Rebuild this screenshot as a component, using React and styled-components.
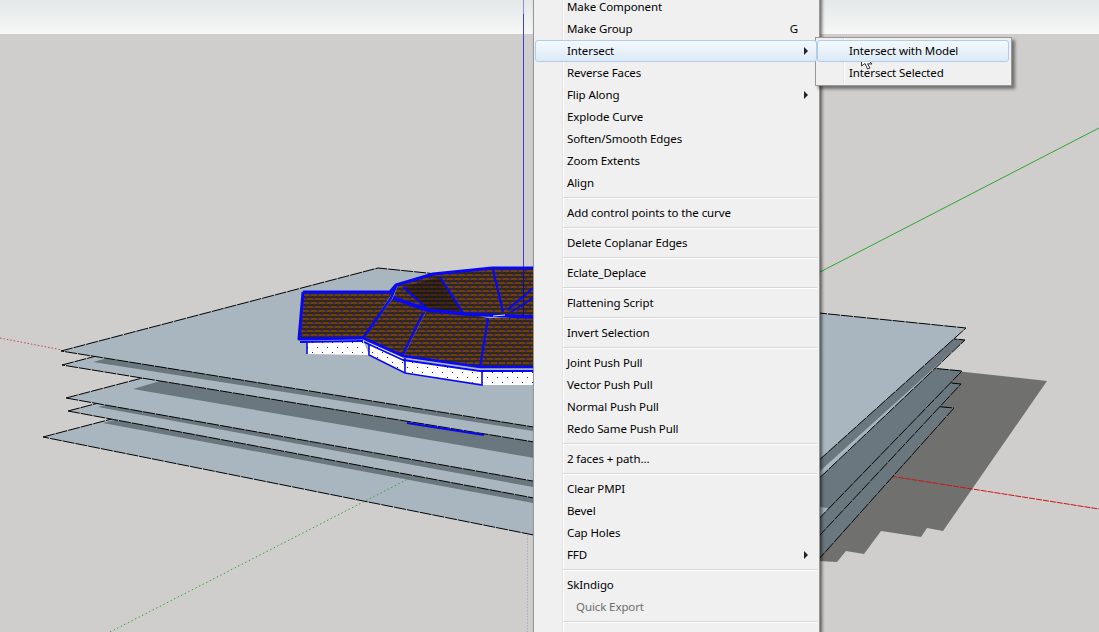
import React from 'react';
import styled, { createGlobalStyle } from 'styled-components';

const GlobalStyle = createGlobalStyle`
  html, body {
    margin: 0;
    padding: 0;
    background: #cfcecc;
  }
`;

const Stage = styled.div`
  position: relative;
  width: 1099px;
  height: 632px;
  overflow: hidden;
  background: linear-gradient(#e4e8e8 0, #f6f7f7 34px, #cfcecc 34px);
  font-family: "Noto Sans", "Open Sans", sans-serif;
  font-size: 11.5px;
  color: #000;
`;

const Scene = styled.svg`
  display: block;
  width: 1099px;
  height: 632px;
`;

const Menu = styled.div`
  position: absolute;
  top: -5px;
  left: 533px;
  width: 285px;
  background: #f0f0f0;
  border: 1px solid #979797;
  box-shadow: 2px 2px 3px rgba(0, 0, 0, 0.55);
  &::before {
    content: "";
    position: absolute;
    top: 0;
    bottom: 0;
    left: 28px;
    width: 1px;
    background: #e2e3e3;
    box-shadow: 1px 0 0 #fff;
  }
`;

const SubMenu = styled(Menu)`
  top: 41px;
  left: 281px;
  width: 195px;
  padding: 2px 0 1px;
  box-shadow: 3px 3px 3px rgba(0, 0, 0, 0.45);
  &::before {
    left: 27px;
  }
`;

const Row = styled.div`
  position: relative;
  z-index: 1;
  box-sizing: border-box;
  height: 22px;
  display: flex;
  align-items: center;
  margin: 0 2px 0 1px;
  padding-left: ${({ $disabled }) => ($disabled ? 40 : 31)}px;
  padding-right: 8px;
  border: 1px solid ${({ $active }) => ($active ? '#aeccee' : 'transparent')};
  border-radius: 3px;
  color: ${({ $disabled }) => ($disabled ? '#6d6d6d' : '#000')};
  background: ${({ $active }) =>
    $active ? 'linear-gradient(#f4f9fe, #dde9f6)' : 'transparent'};
  white-space: nowrap;
  line-height: 14px;
`;

const Label = styled.span`
  flex: 1;
  letter-spacing: -0.1px;
`;

const Shortcut = styled.span`
  margin-right: 10px;
`;

const Arrow = styled.i`
  width: 0;
  height: 0;
  border-left: 4px solid #222;
  border-top: 4px solid transparent;
  border-bottom: 4px solid transparent;
`;

const Separator = styled.div`
  position: relative;
  z-index: 1;
  height: 1px;
  margin: 3px 2px 4px 29px;
  background: #d7d7d7;
  box-shadow: 0 1px 0 #fff;
`;

const Cursor = styled.svg`
  position: absolute;
  top: 51px;
  left: 860px;
  width: 14px;
  height: 20px;
`;

const groups = [
  [
    { label: 'Make Component' },
    { label: 'Make Group', shortcut: 'G' },
    { label: 'Intersect', arrow: true, active: true },
    { label: 'Reverse Faces' },
    { label: 'Flip Along', arrow: true },
    { label: 'Explode Curve' },
    { label: 'Soften/Smooth Edges' },
    { label: 'Zoom Extents' },
    { label: 'Align' },
  ],
  [{ label: 'Add control points to the curve' }],
  [{ label: 'Delete Coplanar Edges' }],
  [{ label: 'Eclate_Deplace' }],
  [{ label: 'Flattening Script' }],
  [{ label: 'Invert Selection' }],
  [
    { label: 'Joint Push Pull' },
    { label: 'Vector Push Pull' },
    { label: 'Normal Push Pull' },
    { label: 'Redo Same Push Pull' },
  ],
  [{ label: '2 faces + path...' }],
  [
    { label: 'Clear PMPI' },
    { label: 'Bevel' },
    { label: 'Cap Holes' },
    { label: 'FFD', arrow: true },
  ],
  [{ label: 'SkIndigo' }, { label: 'Quick Export', disabled: true }],
  [{ label: '' }],
];

const plates = [
  {
    face: '43,437 360,354 954,408 794,587',
    shade: '103,423 360,354 954,408 794,587 533,503',
  },
  {
    face: '68,411 385,328 961,384 807,549',
    shade: '98,407 385,328 961,384 807,549 533,487',
  },
  {
    face: '66,398 383,315 962,371 808,530',
    shade: '133,389 383,315 962,371 832,509',
  },
  {
    face: '62,365 379,282 965,340 810,487',
    shade: '93,362 379,282 965,340 810,480 533,431',
  },
];

const bricks = [
  '303,292 393,292 363,338 299,339',
  '363,338 393,298 427,310 403,357',
  '427,310 465,313 488,318 480,367 403,357',
  '488,318 533,317 533,367 480,367',
];

const walls = [
  '307,341 363,340 369,355 307,354',
  '369,343 403,358 405,373 369,355',
  '405,360 482,370 482,384 405,373',
  '482,372 533,372 533,385 482,385',
];

const Model = () => (
  <g>
    <defs>
      <pattern id="brick" width="8" height="8" patternUnits="userSpaceOnUse">
        <rect width="8" height="8" fill="#6e4108" />
        <rect y="0" width="8" height="2" fill="#33281e" />
        <rect y="4" width="8" height="2" fill="#33281e" />
        <rect x="1" y="2" width="1.5" height="1.5" fill="#1010e0" />
        <rect x="5" y="6" width="1.5" height="1.5" fill="#1010e0" />
      </pattern>
      <pattern id="brickDark" width="8" height="8" patternUnits="userSpaceOnUse">
        <rect width="8" height="8" fill="#462808" />
        <rect y="0" width="8" height="2" fill="#221a14" />
        <rect y="4" width="8" height="2" fill="#221a14" />
        <rect x="1" y="2" width="1.5" height="1.5" fill="#14149c" />
        <rect x="5" y="6" width="1.5" height="1.5" fill="#14149c" />
      </pattern>
      <pattern id="wall" width="10" height="10" patternUnits="userSpaceOnUse">
        <rect width="10" height="10" fill="#fff" />
        <rect x="2" y="2" width="1" height="1" fill="#1010e0" />
        <rect x="7" y="7" width="1" height="1" fill="#1010e0" />
      </pattern>
    </defs>

    {walls.map((points) => (
      <polygon key={points} points={points} fill="url(#wall)" />
    ))}
    <polyline points="307,342 307,354" fill="none" stroke="#0c0cf0" strokeWidth="1.6" />
    <polyline
      points="369,345 369,355 405,373 482,385 482,370"
      fill="none"
      stroke="#0c0cf0"
      strokeWidth="1.6"
    />
    <polyline points="405,358 405,373" fill="none" stroke="#0c0cf0" strokeWidth="1.6" />

    <polygon
      points="398,285 433,274 492,268 533,268 533,317 465,313 427,310 393,298"
      fill="url(#brick)"
    />
    <polygon points="403,287 440,277 463,313 427,309" fill="url(#brickDark)" />
    {bricks.map((points) => (
      <polygon key={points} points={points} fill="url(#brick)" />
    ))}

    <g fill="none" stroke="#0808f4" strokeLinejoin="round">
      <polyline
        points="303,292 390,292 396,285 433,274 492,268 533,268"
        strokeWidth="3"
      />
      <polyline points="303,292 299,339 363,338" strokeWidth="3" />
      <polyline points="300,342 363,341" strokeWidth="1.8" />
      <polyline points="393,298 427,310 465,314 533,317" strokeWidth="3.5" />
      <polyline points="396,286 391,298 363,338 403,356 480,367 533,367" strokeWidth="2.5" />
      <polyline points="364,342 403,360 480,371 533,371" strokeWidth="1.8" />
      <polyline points="423,313 402,356" strokeWidth="2.2" />
      <polyline points="488,318 480,367" strokeWidth="2.2" />
      <polyline points="440,277 463,313" strokeWidth="2.2" />
      <polyline points="403,287 427,309" strokeWidth="2.2" />
      <polyline points="493,270 503,312" strokeWidth="2.2" />
      <polyline points="533,288 507,310" strokeWidth="2.2" />
      <polyline points="533,298 511,312" strokeWidth="1.8" />
    </g>
    <line x1="493" y1="316" x2="505" y2="315" stroke="#d8e4f4" strokeWidth="1.2" />
  </g>
);

const App = () => (
  <Stage>
    <GlobalStyle />
    <Scene viewBox="0 0 1099 632">
      <line x1="523.5" y1="0" x2="523.5" y2="14" stroke="#8f8fd8" />
      <line x1="523.5" y1="14" x2="523.5" y2="300" stroke="#4040cc" />
      <line x1="820" y1="272" x2="1099" y2="128" stroke="#2ea52e" />
      <line x1="0" y1="338" x2="62" y2="350" stroke="#c04848" strokeDasharray="1.5 2" />
      <line x1="527.5" y1="535" x2="527.5" y2="632" stroke="#a8a8d4" strokeDasharray="1.5 1.5" />

      <polygon
        points="937,369 1047,381 943,531 927,528 921,537 881,531 864,554 846,551 837,562 800,560"
        fill="#70706e"
      />
      <line x1="877" y1="474" x2="1099" y2="509" stroke="#cc1414" strokeDasharray="6 1" />

      {plates.map((plate) => (
        <g key={plate.face}>
          <polygon points={plate.face} fill="#a9b6bf" />
          <polygon points={plate.shade} fill="#6b777e" />
          <polygon
            points={plate.face}
            fill="none"
            stroke="#000"
            strokeDasharray="12 1"
          />
        </g>
      ))}

      <line x1="110" y1="632" x2="410" y2="478" stroke="#2ea52e" strokeDasharray="1.5 2.5" />
      <line x1="407" y1="423" x2="484" y2="435" stroke="#0808f4" strokeWidth="2" />

      <polygon points="61,351 378,268 966,328 807,471" fill="#a9b6bf" />
      <polygon
        points="61,351 378,268 966,328 807,471"
        fill="none"
        stroke="#000"
        strokeDasharray="12 1"
      />
      <Model />
      <line x1="523.5" y1="268" x2="523.5" y2="316" stroke="#0a0a90" />
    </Scene>

    <Menu>
      {groups.map((group, index) => (
        <React.Fragment key={index}>
          {index > 0 && <Separator />}
          {group.map((item) => (
            <Row key={item.label} $active={item.active} $disabled={item.disabled}>
              <Label>{item.label}</Label>
              {item.shortcut && <Shortcut>{item.shortcut}</Shortcut>}
              {item.arrow && <Arrow />}
            </Row>
          ))}
        </React.Fragment>
      ))}
      <SubMenu>
        <Row $active>
          <Label>Intersect with Model</Label>
        </Row>
        <Row>
          <Label>Intersect Selected</Label>
        </Row>
      </SubMenu>
    </Menu>

    <Cursor viewBox="0 0 14 20">
      <path
        d="M1.5 1 L1.5 15 L5 12.5 L7.5 18 L10 17 L7.5 12.8 L12 13 Z"
        fill="#fff"
        stroke="#333"
        strokeWidth="1"
        strokeLinejoin="round"
      />
    </Cursor>
  </Stage>
);

export default App;
